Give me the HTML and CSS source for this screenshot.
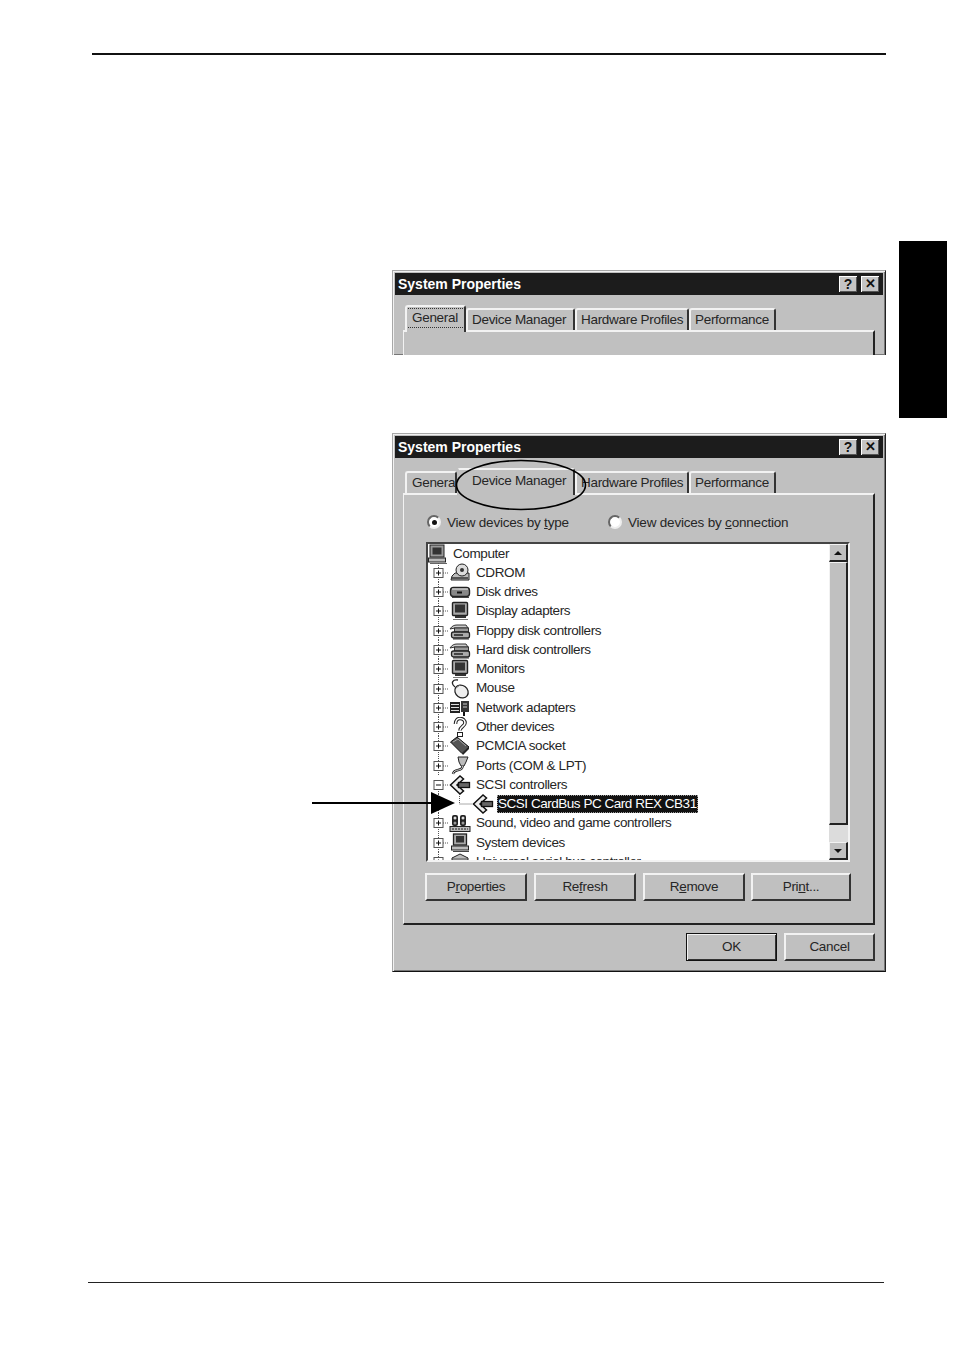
FILE: index.html
```html
<!DOCTYPE html>
<html lang="en">
<head>
<meta charset="utf-8">
<title>System Properties</title>
<link rel="stylesheet" href="styles.css">
</head>
<body>
<svg class="defs" aria-hidden="true">
  <symbol id="g-plus" viewBox="0 0 21 20"><path class="dot" d="M10.5 0V20M15 10H21"/><rect class="bx" x="6" y="5.5" width="9" height="9"/><path class="pm" d="M8 10H13M10.5 7.5V12.5"/></symbol>
  <symbol id="g-minus" viewBox="0 0 21 20"><path class="dot" d="M10.5 14V20M15 10H21"/><rect class="bx" x="6" y="5.5" width="9" height="9"/><path class="pm" d="M8 10H13"/></symbol>
  <symbol id="g-child" viewBox="0 0 44 20"><path class="dot" d="M10.5 0V20M31.5 0V10H44"/></symbol>

  <symbol id="i-computer" viewBox="0 0 22 20"><rect x="3" y="1" width="14" height="12" fill="#9a9a9a" stroke="#222"/><rect x="5.5" y="3.5" width="9" height="7" fill="#333"/><rect x="1.5" y="14" width="17" height="4" fill="#bbb" stroke="#222"/><path d="M3 19.500H20" stroke="#666"/></symbol>
  <symbol id="i-cdrom" viewBox="0 0 22 20"><path d="M3 13 6 10H20V17H2Z" fill="#bbb" stroke="#222"/><ellipse cx="13" cy="7" rx="6" ry="6" fill="#ddd" stroke="#222"/><circle cx="13" cy="7" r="2" fill="#333"/><path d="M3 15H19" stroke="#333" stroke-width="1.500"/></symbol>
  <symbol id="i-disk" viewBox="0 0 22 20"><rect x="1.500" y="5.500" width="19" height="9" rx="3" fill="#888" stroke="#222" stroke-width="1.400"/><path d="M3 7H19" stroke="#eee"/><path d="M8 10.500H13" stroke="#111" stroke-width="2"/><path d="M3 15.500H20" stroke="#444"/></symbol>
  <symbol id="i-monitor" viewBox="0 0 22 20"><rect x="3.500" y="1.500" width="15" height="13" rx="1" fill="#aaa" stroke="#222" stroke-width="1.400"/><rect x="6" y="3.500" width="10" height="8" fill="#333"/><path d="M6 16H17" stroke="#333" stroke-width="2"/><path d="M4 18.500H19" stroke="#777"/></symbol>
  <symbol id="i-ctrl" viewBox="0 0 22 20"><path d="M1 8C3 5 5 4 8 4H17L19 7H6Z" fill="#ccc" stroke="#333"/><rect x="5.500" y="7" width="14" height="4" fill="#999" stroke="#333"/><rect x="2.500" y="11" width="18" height="6" rx="2" fill="#aaa" stroke="#222" stroke-width="1.300"/><path d="M5 14H14" stroke="#222" stroke-width="1.500"/><path d="M4 18H20" stroke="#333"/></symbol>
  <symbol id="i-mouse" viewBox="0 0 22 20"><path d="M6 8C1 4 4 0 9 1" fill="none" stroke="#222" stroke-width="1.300"/><ellipse cx="12.500" cy="12.500" rx="7" ry="6" fill="#eee" stroke="#222" stroke-width="1.300" transform="rotate(35 12.500 12.500)"/><path d="M7 9 11 6" stroke="#777"/></symbol>
  <symbol id="i-network" viewBox="0 0 22 20"><rect x="1" y="4" width="10" height="11" fill="#222"/><path d="M2 6.500H10M2 9.500H10M2 12.500H10" stroke="#ddd"/><rect x="12" y="3" width="8" height="11" fill="#333"/><path d="M14 6H18M14 9H18" stroke="#ccc"/><path d="M15 14V18" stroke="#111" stroke-width="2"/></symbol>
  <symbol id="i-other" viewBox="0 0 22 20"><path d="M6.500 7C6.500 3 9 1.500 11 1.500 14 1.500 16 3.500 16 6 16 9 11 10 11 13.500" fill="none" stroke="#222" stroke-width="3.600"/><path d="M6.500 7C6.500 3 9 1.500 11 1.500 14 1.500 16 3.500 16 6 16 9 11 10 11 13.500" fill="none" stroke="#fff" stroke-width="1.600"/><rect x="8.500" y="15.500" width="5" height="4" fill="#fff" stroke="#222"/></symbol>
  <symbol id="i-pcmcia" viewBox="0 0 22 20"><path d="M1.500 6 8 1 20 11 13 17.500Z" fill="#555" stroke="#111"/><path d="M4 6 9 3 17 10" fill="none" stroke="#aaa"/><path d="M13 17.500 20 11V13L14 19Z" fill="#222"/></symbol>
  <symbol id="i-ports" viewBox="0 0 22 20"><path d="M9 1H19L17 6 15 10H12L10 6Z" fill="#bbb" stroke="#222"/><path d="M13.500 10C14 16 5 12 4 18" fill="none" stroke="#222" stroke-width="2.400"/><path d="M13.500 10C14 16 5 12 4 18" fill="none" stroke="#ccc"/></symbol>
  <symbol id="i-scsi" viewBox="0 0 22 20"><path d="M11 1 1.500 10 11 19 14.500 16 8 10 14.500 4Z" fill="#eee" stroke="#111" stroke-width="1.500"/><rect x="9.500" y="7.500" width="11" height="5" fill="#666" stroke="#111" stroke-width="1.300"/></symbol>
  <symbol id="i-sound" viewBox="0 0 22 20"><rect x="3" y="2" width="6" height="11" rx="2" fill="#222"/><rect x="11" y="2" width="6" height="11" rx="2" fill="#222"/><circle cx="6" cy="5" r="1.500" fill="#ddd"/><circle cx="14" cy="5" r="1.500" fill="#ddd"/><circle cx="6" cy="10" r="1.500" fill="#999"/><circle cx="14" cy="10" r="1.500" fill="#999"/><rect x="1" y="13.500" width="20" height="5" fill="#bbb" stroke="#222"/><path d="M3 16H19" stroke="#222" stroke-dasharray="2 1"/></symbol>
  <symbol id="i-system" viewBox="0 0 22 20"><rect x="4.500" y="1" width="13" height="11" fill="#aaa" stroke="#222" stroke-width="1.300"/><rect x="7" y="3" width="8" height="6.500" fill="#333"/><rect x="2.500" y="13" width="17" height="4" fill="#bbb" stroke="#222"/><path d="M4 18.500H20" stroke="#444"/></symbol>
  <symbol id="i-usb" viewBox="0 0 22 20"><path d="M3 6 11 2 19 6 11 11Z" fill="#bbb" stroke="#222"/><path d="M3 6V12L11 17 19 12V6" fill="#888" stroke="#222"/></symbol>
</svg>

<div class="rule rule-top"></div>

<main class="content">
  <div class="dialogs">
    <section class="win win-crop">
      <header class="title"><span class="title-text">System Properties</span><span class="cap">?</span><span class="cap cap-x">✕</span></header>
      <div class="body">
        <div class="tabs">
          <div class="tab active w-gen"><span class="focus">General</span></div>
          <div class="tab w-dev">Device Manager</div>
          <div class="tab w-hw">Hardware Profiles</div>
          <div class="tab w-perf">Performance</div>
        </div>
        <div class="panel panel-stub"></div>
      </div>
    </section>

    <section class="win win-full">
      <header class="title"><span class="title-text">System Properties</span><span class="cap">?</span><span class="cap cap-x">✕</span></header>
      <div class="body">
        <div class="tabs">
          <div class="tab w-gen2">General</div>
          <div class="tab active w-dev2">Device Manager</div>
          <div class="tab w-hw">Hardware Profiles</div>
          <div class="tab w-perf">Performance</div>
        </div>
        <div class="panel">
          <div class="radios">
            <div class="radio r-type"><span class="dotbox on"></span><span>View devices by <u>t</u>ype</span></div>
            <div class="radio"><span class="dotbox"></span><span>View devices by <u>c</u>onnection</span></div>
          </div>
          <div class="list">
            <div class="tree">
              <div class="row root"><svg class="ic"><use href="#i-computer"/></svg><span class="lbl">Computer</span></div>
              <div class="row"><svg class="gut"><use href="#g-plus"/></svg><svg class="ic"><use href="#i-cdrom"/></svg><span class="lbl">CDROM</span></div>
              <div class="row"><svg class="gut"><use href="#g-plus"/></svg><svg class="ic"><use href="#i-disk"/></svg><span class="lbl">Disk drives</span></div>
              <div class="row"><svg class="gut"><use href="#g-plus"/></svg><svg class="ic"><use href="#i-monitor"/></svg><span class="lbl">Display adapters</span></div>
              <div class="row"><svg class="gut"><use href="#g-plus"/></svg><svg class="ic"><use href="#i-ctrl"/></svg><span class="lbl">Floppy disk controllers</span></div>
              <div class="row"><svg class="gut"><use href="#g-plus"/></svg><svg class="ic"><use href="#i-ctrl"/></svg><span class="lbl">Hard disk controllers</span></div>
              <div class="row"><svg class="gut"><use href="#g-plus"/></svg><svg class="ic"><use href="#i-monitor"/></svg><span class="lbl">Monitors</span></div>
              <div class="row"><svg class="gut"><use href="#g-plus"/></svg><svg class="ic"><use href="#i-mouse"/></svg><span class="lbl">Mouse</span></div>
              <div class="row"><svg class="gut"><use href="#g-plus"/></svg><svg class="ic"><use href="#i-network"/></svg><span class="lbl">Network adapters</span></div>
              <div class="row"><svg class="gut"><use href="#g-plus"/></svg><svg class="ic"><use href="#i-other"/></svg><span class="lbl">Other devices</span></div>
              <div class="row"><svg class="gut"><use href="#g-plus"/></svg><svg class="ic"><use href="#i-pcmcia"/></svg><span class="lbl">PCMCIA socket</span></div>
              <div class="row"><svg class="gut"><use href="#g-plus"/></svg><svg class="ic"><use href="#i-ports"/></svg><span class="lbl">Ports (COM &amp; LPT)</span></div>
              <div class="row"><svg class="gut"><use href="#g-minus"/></svg><svg class="ic"><use href="#i-scsi"/></svg><span class="lbl">SCSI controllers</span></div>
              <div class="row"><svg class="gut gut-child"><use href="#g-child"/></svg><svg class="ic"><use href="#i-scsi"/></svg><span class="lbl selected">SCSI CardBus PC Card REX CB31</span></div>
              <div class="row"><svg class="gut"><use href="#g-plus"/></svg><svg class="ic"><use href="#i-sound"/></svg><span class="lbl">Sound, video and game controllers</span></div>
              <div class="row"><svg class="gut"><use href="#g-plus"/></svg><svg class="ic"><use href="#i-system"/></svg><span class="lbl">System devices</span></div>
              <div class="row"><svg class="gut"><use href="#g-plus"/></svg><svg class="ic"><use href="#i-usb"/></svg><span class="lbl">Universal serial bus controller</span></div>
            </div>
            <div class="scroll">
              <div class="sbtn"><span class="tri up"></span></div>
              <div class="thumb"></div>
              <div class="dither"></div>
              <div class="sbtn"><span class="tri down"></span></div>
            </div>
          </div>
          <div class="btnrow">
            <div class="btn">P<u>r</u>operties</div>
            <div class="btn">Re<u>f</u>resh</div>
            <div class="btn">R<u>e</u>move</div>
            <div class="btn btn-last">Pri<u>n</u>t...</div>
          </div>
        </div>
        <div class="footer">
          <div class="btn btn-ok">OK</div>
          <div class="btn btn-cancel">Cancel</div>
        </div>
      </div>
      <svg class="ellipse" viewBox="0 0 132 52"><ellipse cx="66" cy="26" rx="64.500" ry="24.500"/></svg>
      <svg class="arrow" viewBox="0 0 146 24"><path d="M0 11H122" stroke="#000" stroke-width="2"/><path d="M119 0 143 11 119 22Z" fill="#000"/></svg>
    </section>
  </div>
  <aside class="thumbtab"></aside>
</main>

<div class="rule rule-bottom"></div>
</body>
</html>
```

FILE: styles.css
```css
* { box-sizing: border-box; }
html, body { margin: 0; padding: 0; background: #fff; }
body {
  width: 954px;
  height: 1351px;
  overflow: hidden;
  font-family: "Liberation Sans", Arial, sans-serif;
  font-size: 13.5px;
  letter-spacing: -0.3px;
  color: #262626;
}
.defs { width: 0; height: 0; display: block; }

.rule { background: #111; }
.rule-top { margin: 53px 0 0 92px; width: 794px; height: 2px; }
.rule-bottom { margin: 310px 0 0 88px; width: 796px; height: 1px; background: #222; }

.content { display: flex; align-items: flex-start; margin: 186px 0 0 392px; }
.dialogs { width: 494px; padding-top: 29px; display: flex; flex-direction: column; gap: 78px; }
.thumbtab { width: 48px; height: 177px; margin-left: 13px; background: #000; flex: none; }

.win {
  position: relative;
  background: #c0c0c0;
  border: 1px solid;
  border-color: #a8a8a8 #222 #111 #a8a8a8;
  box-shadow: inset 1px 1px 0 #f2f2f2, inset -1px -1px 0 #777;
  padding: 2px;
}
.win-crop { height: 85px; overflow: hidden; border-bottom: 0; }
.win-full { height: 539px; }

.title {
  height: 22px;
  background: #1c1c1c;
  color: #fff;
  display: flex;
  align-items: center;
  padding: 0 3px;
}
.title-text { flex: 1; font-weight: 700; font-size: 14px; letter-spacing: 0; }
.cap {
  width: 18px;
  height: 16px;
  margin-right: 4px;
  background: #c4c4c4;
  color: #111;
  font-weight: 700;
  font-size: 14px;
  line-height: 16px;
  text-align: center;
  box-shadow: inset 1px 1px 0 #fff, inset -1px -1px 0 #555;
}
.cap-x { font-size: 13px; margin-right: 1px; }

.body { padding: 10px 8px 0; }
.tabs { display: flex; align-items: flex-end; height: 25px; padding-left: 2px; position: relative; z-index: 1; }
.tab {
  height: 22px;
  flex: none;
  background: #c0c0c0;
  border-top: 2px solid #f2f2f2;
  border-left: 2px solid #f2f2f2;
  border-right: 2px solid #333;
  border-radius: 3px 3px 0 0;
  padding: 1px 0 0 4px;
  line-height: 17px;
  white-space: nowrap;
  overflow: hidden;
}
.tab.active { height: 27px; margin-bottom: -2px; padding-top: 2px; position: relative; z-index: 2; }
.w-gen { width: 61px; padding-left: 0; }
.w-dev { width: 109px; }
.w-hw { width: 114px; }
.w-perf { width: 87px; }
.w-gen2 { width: 52px; padding-left: 5px; }
.w-dev2 { width: 118px; padding-left: 13px; border-left-color: #c0c0c0; }
.focus { display: block; outline: 1px dotted #333; padding: 0 5px; height: 18px; }

.panel {
  height: 432px;
  background: #c0c0c0;
  border-top: 2px solid #f2f2f2;
  border-left: 1px solid #f2f2f2;
  border-right: 2px solid #222;
  border-bottom: 2px solid #222;
  padding: 18px 0 0 22px;
}
.panel-stub { height: 60px; }

.radios { display: flex; height: 18px; align-items: center; padding-left: 1px; letter-spacing: -0.2px; }
.radio { display: flex; align-items: center; white-space: nowrap; }
.r-type { width: 181px; }
.dotbox {
  width: 14px;
  height: 14px;
  margin-right: 6px;
  border-radius: 50%;
  background: #fff;
  border: 2px solid #666;
  border-right-color: #eee;
  border-bottom-color: #eee;
  position: relative;
}
.dotbox.on::after { content: ""; position: absolute; inset: 2.500px; border-radius: 50%; background: #111; }

.list {
  margin-top: 11px;
  width: 424px;
  height: 320px;
  background: #fff;
  display: flex;
  border: 2px solid;
  border-color: #444 #f2f2f2 #f2f2f2 #444;
  overflow: hidden;
  letter-spacing: -0.4px;
}
.tree { flex: 1; min-width: 0; overflow: hidden; }
.row { display: flex; align-items: center; height: 19.28px; white-space: nowrap; }
.root .ic { margin-left: -1px; }
.root .lbl { margin-left: 4px; }
.gut { width: 21px; height: 20px; flex: none; }
.gut-child { width: 44px; }
.ic { width: 22px; height: 20px; flex: none; overflow: visible; }
.lbl { margin-left: 5px; line-height: 18px; }
.selected { margin-left: 3px; padding: 0 1px; background: #111; color: #fff; letter-spacing: -0.47px; outline: 1px dotted #999; outline-offset: -1px; }
.dot { fill: none; stroke: #555; stroke-dasharray: 1 1; }
.bx { fill: #fff; stroke: #555; }
.pm { fill: none; stroke: #111; }

.scroll { width: 19px; flex: none; display: flex; flex-direction: column; background: #c0c0c0; }
.sbtn, .thumb {
  background: #c0c0c0;
  border-top: 1px solid #f2f2f2;
  border-left: 1px solid #f2f2f2;
  border-right: 2px solid #222;
  border-bottom: 2px solid #222;
}
.sbtn { height: 18px; display: flex; align-items: center; justify-content: center; flex: none; }
.thumb { flex: 1; }
.dither {
  height: 17px;
  flex: none;
  background-color: #dcdcdc;
  background-image: radial-gradient(#a0a0a0 0.6px, transparent 0.7px);
  background-size: 2px 2px;
}
.tri { width: 0; height: 0; border-left: 4px solid transparent; border-right: 4px solid transparent; }
.tri.up { border-bottom: 4px solid #111; }
.tri.down { border-top: 4px solid #111; }

.btnrow { display: flex; gap: 7px; margin: 11px 0 0 -1px; }
.btn {
  width: 102px;
  height: 28px;
  flex: none;
  background: #c0c0c0;
  border-top: 2px solid #f2f2f2;
  border-left: 2px solid #f2f2f2;
  border-right: 2px solid #333;
  border-bottom: 2px solid #333;
  text-align: center;
  line-height: 23px;
}
.btn-last { width: 100px; margin-left: -1px; }
.footer { display: flex; justify-content: flex-end; gap: 7px; margin-top: 8px; }
.btn-ok { width: 91px; border: 1px solid #111; box-shadow: inset 1px 1px 0 #f2f2f2, inset -1px -1px 0 #333; line-height: 25px; }
.btn-cancel { width: 91px; }

.ellipse { position: absolute; left: 62px; top: 25px; width: 132px; height: 52px; overflow: visible; z-index: 3; }
.ellipse ellipse { fill: none; stroke: #000; stroke-width: 1.600; }
.arrow { position: absolute; left: -81px; top: 358px; width: 146px; height: 24px; overflow: visible; z-index: 3; }
```
